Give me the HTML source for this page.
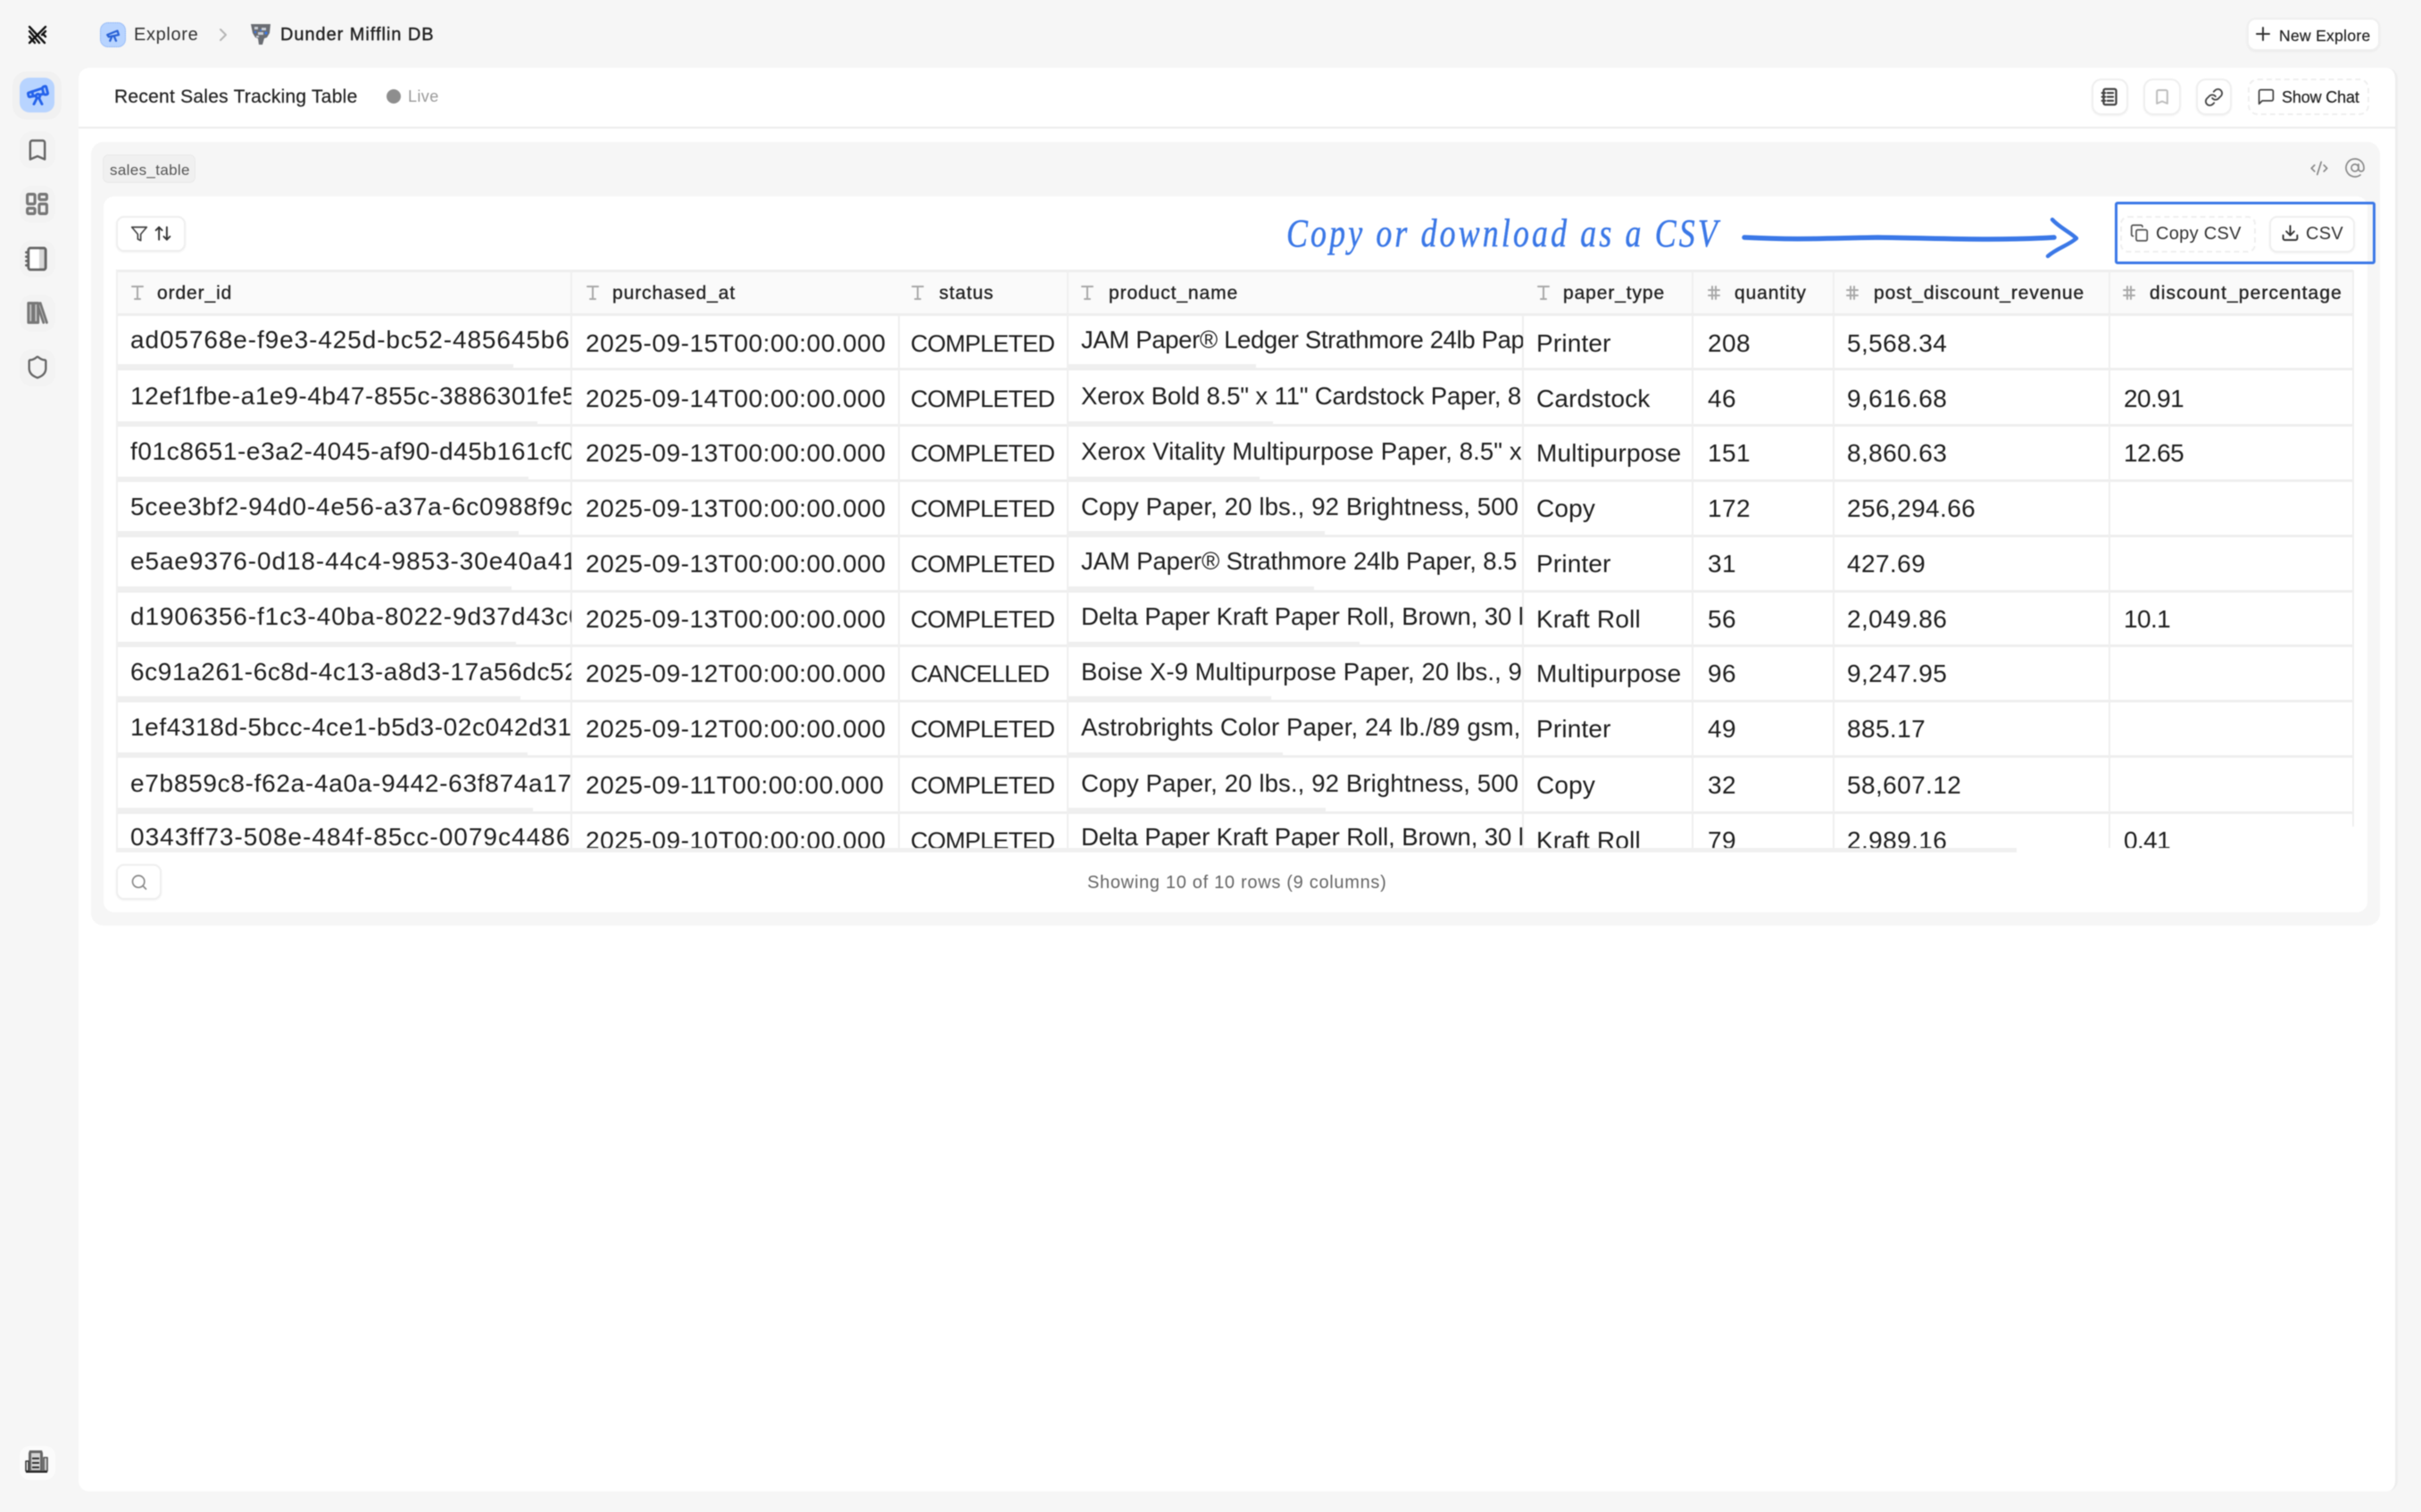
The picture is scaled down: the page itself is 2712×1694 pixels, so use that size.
<!DOCTYPE html>
<html lang="en"><head><meta charset="utf-8"><title>Recent Sales Tracking Table</title>
<style>
html,body{margin:0;padding:0;background:#f6f6f6}
#p{position:relative;width:2712px;height:1694px;overflow:hidden;background:#f6f6f6;font-family:"Liberation Sans",sans-serif;color:#222;filter:blur(.65px)}
#p div,#p svg{position:absolute;box-sizing:border-box}
.t{white-space:nowrap;line-height:30px;height:30px}
svg{fill:none;stroke:currentColor;stroke-width:2;stroke-linecap:round;stroke-linejoin:round}
.btn{background:#fff;border:2px solid #efefef;border-radius:9px;box-shadow:0 1px 2px rgba(0,0,0,.05)}
.dash{border-style:dashed}
.hd{font-size:21px;letter-spacing:.9px;-webkit-text-stroke:.35px #222;top:314px}
.v{width:2px;background:#efefef;top:303px;height:647px}
.h{left:130px;width:2506px;height:3px;background:#eeeeee}
.sb{left:130px;height:5px;background:#efefef}
.sp{left:1197px;height:5px;background:#efefef}
.halo{width:40px;height:42px;background:#f3f3f3;border-radius:14px;left:22px}
.r{left:0;width:2712px;height:36px}
.r div{height:36px;line-height:36px;white-space:nowrap;overflow:hidden;font-size:28px;color:#1e1e1e;margin-top:.75px}
.c1{left:146px;width:494px;letter-spacing:var(--o,.9px);top:var(--d)}
.c2{left:656px;width:340px;letter-spacing:.55px}
.r .c3{left:1020px;width:175px;letter-spacing:-.75px;font-size:27px}
.r .c4{left:1211px;width:495px;letter-spacing:var(--q,-.35px);top:var(--d);font-size:27.5px}
.c5{left:1721px;width:176px;letter-spacing:.17px}
.c6{left:1913px;width:130px;letter-spacing:.4px}
.c7{left:2069px;width:290px;letter-spacing:.4px}
.c8{left:2379px;width:250px;letter-spacing:-.6px}
.ti{color:#a8a8a8;stroke-width:2;top:318px;width:20px;height:20px}
</style></head><body>
<div id="p">

<!-- top bar -->
<svg style="left:30px;top:28px;width:24px;height:22px;color:#111;stroke-width:2.4" viewBox="0 0 24 22"><path d="M3 2l17 18M3 7l11 13M3 13l6 7M21 2L3 20M21 7l-4 4M21 13l-3-3"/></svg>
<div style="left:112px;top:25px;width:29px;height:28px;background:#b8d4ff;border:1px dotted #7fa9f0;border-radius:9px"></div>
<svg style="left:118px;top:30px;width:18px;height:18px;color:#2a62d6;stroke-width:3" viewBox="0 0 24 24"><path d="M3 12l15-6 2 6-15 3zM10 14l-3 7M13 14l3 7"/></svg>
<div class="t" style="left:150px;top:24px;font-size:20px;letter-spacing:.65px;color:#333">Explore</div>
<svg style="left:243px;top:30px;width:14px;height:18px;color:#b5b5b5" viewBox="0 0 14 18"><path d="M4 3l6 6-6 6"/></svg>
<svg style="left:279px;top:25px;width:26px;height:27px;stroke:none" viewBox="0 0 26 27"><path fill="#6a6d73" d="M2 2h22l-1 10-3 5-3 1-2 7h-4l-1-7-3-1-3-5z"/><path fill="#c9ced6" d="M6 5h4v3H6zM14 6h5v3h-5zM10 11h6v3h-6zM8 15h3v2H8z"/><circle cx="19" cy="12" r="1.6" fill="#3b78e7"/><circle cx="7" cy="11" r="1.2" fill="#3b78e7"/><circle cx="13" cy="9" r="1" fill="#3b78e7"/></svg>
<div class="t" style="left:314px;top:24px;font-size:20px;letter-spacing:.95px;-webkit-text-stroke:.4px #222">Dunder Mifflin DB</div>

<div class="btn" style="left:2517px;top:20px;width:149px;height:37px;border-radius:10px"></div>
<svg style="left:2526px;top:29px;width:18px;height:18px;color:#333" viewBox="0 0 18 18"><path d="M2 9h14M9 2v14"/></svg>
<div class="t" style="left:2553px;top:25px;font-size:17.5px;letter-spacing:.3px;-webkit-text-stroke:.2px #222">New Explore</div>

<!-- sidebar -->
<div style="left:14px;top:80px;width:55px;height:54px;background:#f1f1f1;border-radius:16px"></div>
<div style="left:22px;top:87px;width:39px;height:39px;background:#b8d4ff;border-radius:11px"></div>
<svg style="left:29px;top:93px;width:27px;height:27px;color:#2563eb;stroke-width:2.6" viewBox="0 0 24 24"><path d="m10.065 12.493-6.18 1.318a.934.934 0 0 1-1.108-.702l-.537-2.15a1.07 1.07 0 0 1 .691-1.265l13.504-4.44"/><path d="m13.56 11.747 4.332-.924"/><path d="m16 21-3.105-6.21"/><path d="M16.485 5.94a2 2 0 0 1 1.455-2.425l1.09-.272a1 1 0 0 1 1.212.727l1.515 6.06a1 1 0 0 1-.727 1.213l-1.09.272a2 2 0 0 1-2.425-1.455z"/><path d="m6.158 8.633 1.114 4.456"/><path d="m8 21 3.105-6.21"/><circle cx="12" cy="13" r="2"/></svg>
<div class="halo" style="top:147px"></div><div class="halo" style="top:208px"></div><div class="halo" style="top:269px"></div><div class="halo" style="top:330px"></div><div class="halo" style="top:391px"></div>
<svg style="left:28px;top:154px;width:28px;height:28px;color:#666;stroke-width:2.1" viewBox="0 0 24 24"><path d="m19 21-7-3-7 3V5a2 2 0 0 1 2-2h10a2 2 0 0 1 2 2z"/></svg>
<svg style="left:27px;top:214px;width:29px;height:29px;color:#777;stroke-width:2.6" viewBox="0 0 24 24"><rect width="7" height="9" x="3" y="3" rx="1"/><rect width="7" height="5" x="14" y="3" rx="1"/><rect width="7" height="9" x="14" y="12" rx="1"/><rect width="7" height="5" x="3" y="16" rx="1"/></svg>
<svg style="left:27px;top:275px;width:29px;height:30px;color:#666;stroke-width:2.3" viewBox="0 0 24 24"><path d="M2 6h4"/><path d="M2 10h4"/><path d="M2 14h4"/><path d="M2 18h4"/><rect width="16" height="20" x="4" y="2" rx="2" fill="#d8d8d8"/><rect width="10" height="20" x="4" y="2" fill="#fff" stroke="none"/><rect width="16" height="20" x="4" y="2" rx="2"/></svg>
<svg style="left:27px;top:336px;width:29px;height:29px;color:#777;stroke-width:2.4" viewBox="0 0 24 24"><path fill="#c4c4c4" d="M4 3h4v18H4zM9 3h4v18H9z"/><path d="m15 3 6 18"/><path d="m13 6 5 15"/></svg>
<svg style="left:28px;top:397px;width:28px;height:29px;color:#666" viewBox="0 0 24 24"><path d="M20 13c0 5-3.5 7.5-7.66 8.95a1 1 0 0 1-.67-.01C7.5 20.5 4 18 4 13V6a1 1 0 0 1 1-1c2 0 4.5-1.2 6.24-2.72a1.17 1.17 0 0 1 1.52 0C14.51 3.81 17 5 19 5a1 1 0 0 1 1 1z"/></svg>
<div style="left:22px;top:1620px;width:40px;height:38px;background:#fbfbfb;border-radius:11px"></div>
<svg style="left:28px;top:1623px;width:28px;height:30px;stroke:none" viewBox="0 0 28 30"><path fill="#666" d="M5 2h14l1 3v20H4V5z"/><path fill="#d4d4d4" d="M7 5h10v19H7z"/><path fill="#333" d="M8 10h8v2H8zM8 15h8v2H8zM8 20h8v2H8z"/><path fill="#fff" stroke="#333" stroke-width="1.6" d="M1 14h3v11H1z"/><path fill="#ccc" stroke="#555" stroke-width="1.6" d="M21 10h4v15h-4z"/><path fill="#222" d="M1 25h24v2H1z"/></svg>

<!-- main panel -->
<div style="left:88px;top:76px;width:2598px;height:1595px;background:#fff;border-radius:12px;border-right:3px solid #eee"></div>
<div style="left:88px;top:142px;width:2596px;height:2px;background:#ececec"></div>
<div class="t" style="left:128px;top:94px;font-size:21px;letter-spacing:.25px;-webkit-text-stroke:.2px #222">Recent Sales Tracking Table</div>
<div style="left:433px;top:100px;width:16px;height:16px;border-radius:50%;background:#8e8e8e"></div>
<div class="t" style="left:457px;top:93px;font-size:18px;letter-spacing:.4px;color:#999">Live</div>

<div class="btn" style="left:2343px;top:88px;width:41px;height:41px;border-radius:11px"></div>
<svg style="left:2353px;top:98px;width:21px;height:21px;color:#444;stroke-width:2.6" viewBox="0 0 24 24"><rect width="16" height="20" x="4" y="2" rx="2"/><path d="M2 7h4M2 12h4M2 17h4M9 7h7M9 12h7M9 17h7"/></svg>
<div class="btn" style="left:2401px;top:88px;width:42px;height:41px;border-radius:11px"></div>
<svg style="left:2412px;top:98px;width:20px;height:21px;color:#bdbdbd;stroke-width:2.4" viewBox="0 0 24 24"><path d="m19 21-7-3-7 3V5a2 2 0 0 1 2-2h10a2 2 0 0 1 2 2z"/></svg>
<div class="btn" style="left:2460px;top:88px;width:40px;height:41px;border-radius:11px"></div>
<svg style="left:2469px;top:98px;width:22px;height:22px;color:#444" viewBox="0 0 24 24"><path d="M10 13a5 5 0 0 0 7.54.54l3-3a5 5 0 0 0-7.07-7.07l-1.72 1.71"/><path d="M14 11a5 5 0 0 0-7.54-.54l-3 3a5 5 0 0 0 7.07 7.07l1.71-1.71"/></svg>
<div class="btn dash" style="left:2518px;top:88px;width:136px;height:41px;border-radius:11px;box-shadow:none"></div>
<svg style="left:2528px;top:98px;width:21px;height:21px;color:#444" viewBox="0 0 24 24"><path d="M21 15a2 2 0 0 1-2 2H7l-4 4V5a2 2 0 0 1 2-2h14a2 2 0 0 1 2 2z"/></svg>
<div class="t" style="left:2556px;top:94px;font-size:18px;letter-spacing:-.15px;-webkit-text-stroke:.2px #222">Show Chat</div>

<!-- card -->
<div style="left:102px;top:159px;width:2564px;height:878px;background:#f6f6f6;border-radius:14px"></div>
<div style="left:115px;top:173px;width:104px;height:32px;background:#f0f0f0;border:1px solid #e9e9e9;border-radius:7px"></div>
<div class="t" style="left:123px;top:176px;font-size:17px;letter-spacing:.35px;color:#555">sales_table</div>
<svg style="left:2587px;top:178px;width:22px;height:21px;color:#8a8a8a" viewBox="0 0 24 24"><path d="m18 16 4-4-4-4"/><path d="m6 8-4 4 4 4"/><path d="m14.5 4-5 16"/></svg>
<svg style="left:2626px;top:176px;width:24px;height:24px;color:#8a8a8a;stroke-width:1.7" viewBox="0 0 24 24"><circle cx="12" cy="12" r="4"/><path d="M16 8v5a3 3 0 0 0 6 0v-1a10 10 0 1 0-4 8"/></svg>

<div style="left:116px;top:220px;width:2536px;height:802px;background:#fff;border-radius:12px"></div>

<div class="btn" style="left:130px;top:242px;width:78px;height:40px"></div>
<svg style="left:146px;top:251px;width:20px;height:22px;color:#444" viewBox="0 0 24 24"><polygon points="22 3 2 3 10 12.46 10 19 14 21 14 12.46 22 3"/></svg>
<svg style="left:172px;top:251px;width:21px;height:21px;color:#333;stroke-width:2.2" viewBox="0 0 24 24"><path d="m21 16-4 4-4-4"/><path d="M17 20V4"/><path d="m3 8 4-4 4 4"/><path d="M7 4v16"/></svg>

<!-- annotation -->
<div class="t" style="left:1441px;top:244px;font-family:'Liberation Serif',serif;font-style:italic;font-size:39px;height:36px;line-height:36px;letter-spacing:3.4px;color:#3b78e7;transform-origin:left center;transform:scale(.92,1.15);-webkit-text-stroke:.4px #3b78e7">Copy or download as a CSV</div>
<svg style="left:1940px;top:235px;width:400px;height:60px;color:#3b78e7;stroke-width:5" viewBox="1940 235 400 60"><path d="M1954 266c60 3 90 1 150 0 70 1 130 4 197 0" stroke-width="5.5"/><path d="M2299 246c8 9 20 14 27 21-9 8-22 11-32 20" stroke-width="4.5"/></svg>
<svg style="left:2369px;top:226px;width:292px;height:70px;color:#3b78e7" viewBox="0 0 292 70"><rect x="1.5" y="1.5" width="289" height="67" rx="1.5" stroke-width="3"/></svg>
<div class="btn dash" style="left:2375px;top:242px;width:152px;height:41px;box-shadow:none"></div>
<svg style="left:2386px;top:250px;width:21px;height:22px;color:#555" viewBox="0 0 24 24"><rect width="14" height="14" x="8" y="8" rx="2"/><path d="M4 16c-1.1 0-2-.9-2-2V4c0-1.1.9-2 2-2h10c1.1 0 2 .9 2 2"/></svg>
<div class="t" style="left:2415px;top:247px;font-size:20px;letter-spacing:.3px;color:#333">Copy CSV</div>
<div class="btn" style="left:2542px;top:242px;width:96px;height:41px"></div>
<svg style="left:2555px;top:250px;width:21px;height:22px;color:#333;stroke-width:2.2" viewBox="0 0 24 24"><path d="M21 15v4a2 2 0 0 1-2 2H5a2 2 0 0 1-2-2v-4"/><polyline points="7 10 12 15 17 10"/><line x1="12" x2="12" y1="15" y2="3"/></svg>
<div class="t" style="left:2583px;top:247px;font-size:20px;letter-spacing:.3px;color:#333">CSV</div>

<!-- table -->
<div style="left:130px;top:303px;width:2506px;height:50px;background:#fafafa"></div>
<div class="h" style="top:302px"></div>
<div class="h" style="top:351px"></div>
<div class="h" style="top:412px"></div>
<div class="h" style="top:475px"></div>
<div class="h" style="top:537px"></div>
<div class="h" style="top:599px"></div>
<div class="h" style="top:661px"></div>
<div class="h" style="top:722px"></div>
<div class="h" style="top:784px"></div>
<div class="h" style="top:846px"></div>
<div class="h" style="top:909px"></div>

<div class="sb" style="top:408px;width:445px"></div>
<div class="sb" style="top:472px;width:472px"></div>
<div class="sb" style="top:534px;width:462px"></div>
<div class="sb" style="top:595px;width:451px"></div>
<div class="sb" style="top:657px;width:443px"></div>
<div class="sb" style="top:719px;width:448px"></div>
<div class="sb" style="top:780px;width:453px"></div>
<div class="sb" style="top:843px;width:461px"></div>
<div class="sb" style="top:905px;width:467px"></div>
<div class="sp" style="top:408px;width:210px"></div>
<div class="sp" style="top:472px;width:229px"></div>
<div class="sp" style="top:534px;width:214px"></div>
<div class="sp" style="top:595px;width:287px"></div>
<div class="sp" style="top:657px;width:275px"></div>
<div class="sp" style="top:719px;width:326px"></div>
<div class="sp" style="top:780px;width:227px"></div>
<div class="sp" style="top:843px;width:240px"></div>
<div class="sp" style="top:905px;width:288px"></div>

<div class="v" style="left:130px;background:#f0f0f0"></div>
<div class="v" style="left:639px"></div>
<div class="v" style="left:1006px;top:353px;height:597px"></div>
<div class="v" style="left:1195px"></div>
<div class="v" style="left:1705px;top:353px;height:597px"></div>
<div class="v" style="left:1895px"></div>
<div class="v" style="left:2053px"></div>
<div class="v" style="left:2362px"></div>
<div class="v" style="left:2635px;height:623px"></div>

<svg class="ti" style="left:144px" viewBox="0 0 20 20"><path d="M4 3h12M10 3v14M7 17h6"/></svg><div class="t hd" style="left:176px">order_id</div>
<svg class="ti" style="left:654px" viewBox="0 0 20 20"><path d="M4 3h12M10 3v14M7 17h6"/></svg><div class="t hd" style="left:686px">purchased_at</div>
<svg class="ti" style="left:1018px" viewBox="0 0 20 20"><path d="M4 3h12M10 3v14M7 17h6"/></svg><div class="t hd" style="left:1052px">status</div>
<svg class="ti" style="left:1208px" viewBox="0 0 20 20"><path d="M4 3h12M10 3v14M7 17h6"/></svg><div class="t hd" style="left:1242px">product_name</div>
<svg class="ti" style="left:1719px" viewBox="0 0 20 20"><path d="M4 3h12M10 3v14M7 17h6"/></svg><div class="t hd" style="left:1751px">paper_type</div>
<svg class="ti" style="left:1910px" viewBox="0 0 20 20"><path d="M4 7h12M4 13h12M8 3v14M12 3v14"/></svg><div class="t hd" style="left:1943px">quantity</div>
<svg class="ti" style="left:2065px" viewBox="0 0 20 20"><path d="M4 7h12M4 13h12M8 3v14M12 3v14"/></svg><div class="t hd" style="left:2099px">post_discount_revenue</div>
<svg class="ti" style="left:2375px" viewBox="0 0 20 20"><path d="M4 7h12M4 13h12M8 3v14M12 3v14"/></svg><div class="t hd" style="left:2408px;letter-spacing:1.1px">discount_percentage</div>

<div class="r" style="top:366px;--d:-4px"><div class="c1">ad05768e-f9e3-425d-bc52-485645b6</div><div class="c2">2025-09-15T00:00:00.000</div><div class="c3">COMPLETED</div><div class="c4">JAM Paper® Ledger Strathmore 24lb Paper</div><div class="c5">Printer</div><div class="c6">208</div><div class="c7">5,568.34</div><div class="c8"></div></div>
<div class="r" style="top:428px;--d:-3px;--o:.6px;--q:-.15px"><div class="c1">12ef1fbe-a1e9-4b47-855c-3886301fe5</div><div class="c2">2025-09-14T00:00:00.000</div><div class="c3">COMPLETED</div><div class="c4">Xerox Bold 8.5" x 11" Cardstock Paper, 8</div><div class="c5">Cardstock</div><div class="c6">46</div><div class="c7">9,616.68</div><div class="c8">20.91</div></div>
<div class="r" style="top:489px;--d:-2px;--o:.6px;--q:.11px"><div class="c1">f01c8651-e3a2-4045-af90-d45b161cf0</div><div class="c2">2025-09-13T00:00:00.000</div><div class="c3">COMPLETED</div><div class="c4">Xerox Vitality Multipurpose Paper, 8.5" x</div><div class="c5">Multipurpose</div><div class="c6">151</div><div class="c7">8,860.63</div><div class="c8">12.65</div></div>
<div class="r" style="top:551px;--d:-2px;--o:.85px;--q:.14px"><div class="c1">5cee3bf2-94d0-4e56-a37a-6c0988f9c</div><div class="c2">2025-09-13T00:00:00.000</div><div class="c3">COMPLETED</div><div class="c4">Copy Paper, 20 lbs., 92 Brightness, 500</div><div class="c5">Copy</div><div class="c6">172</div><div class="c7">256,294.66</div><div class="c8"></div></div>
<div class="r" style="top:613px;--d:-3px;--o:.9px;--q:-.12px"><div class="c1">e5ae9376-0d18-44c4-9853-30e40a41</div><div class="c2">2025-09-13T00:00:00.000</div><div class="c3">COMPLETED</div><div class="c4">JAM Paper® Strathmore 24lb Paper, 8.5</div><div class="c5">Printer</div><div class="c6">31</div><div class="c7">427.69</div><div class="c8"></div></div>
<div class="r" style="top:675px;--d:-3px;--q:-.1px"><div class="c1">d1906356-f1c3-40ba-8022-9d37d43c0</div><div class="c2">2025-09-13T00:00:00.000</div><div class="c3">COMPLETED</div><div class="c4">Delta Paper Kraft Paper Roll, Brown, 30 lb</div><div class="c5">Kraft Roll</div><div class="c6">56</div><div class="c7">2,049.86</div><div class="c8">10.1</div></div>
<div class="r" style="top:736px;--d:-2px;--o:.6px;--q:.08px"><div class="c1">6c91a261-6c8d-4c13-a8d3-17a56dc52</div><div class="c2">2025-09-12T00:00:00.000</div><div class="c3">CANCELLED</div><div class="c4">Boise X-9 Multipurpose Paper, 20 lbs., 9</div><div class="c5">Multipurpose</div><div class="c6">96</div><div class="c7">9,247.95</div><div class="c8"></div></div>
<div class="r" style="top:798px;--d:-2px;--o:.6px;--q:.12px"><div class="c1">1ef4318d-5bcc-4ce1-b5d3-02c042d31e</div><div class="c2">2025-09-12T00:00:00.000</div><div class="c3">COMPLETED</div><div class="c4">Astrobrights Color Paper, 24 lb./89 gsm,</div><div class="c5">Printer</div><div class="c6">49</div><div class="c7">885.17</div><div class="c8"></div></div>
<div class="r" style="top:861px;--d:-2px;--o:.7px;--q:.14px"><div class="c1">e7b859c8-f62a-4a0a-9442-63f874a17e</div><div class="c2">2025-09-11T00:00:00.000</div><div class="c3">COMPLETED</div><div class="c4">Copy Paper, 20 lbs., 92 Brightness, 500</div><div class="c5">Copy</div><div class="c6">32</div><div class="c7">58,607.12</div><div class="c8"></div></div>
<div class="r" style="top:923px;--d:-4px;--o:1px;--q:-.1px"><div class="c1">0343ff73-508e-484f-85cc-0079c4486</div><div class="c2">2025-09-10T00:00:00.000</div><div class="c3">COMPLETED</div><div class="c4">Delta Paper Kraft Paper Roll, Brown, 30 lb</div><div class="c5">Kraft Roll</div><div class="c6">79</div><div class="c7">2,989.16</div><div class="c8">0.41</div></div>

<!-- clip under table -->
<div style="left:116px;top:950px;width:2536px;height:72px;background:#fff;border-radius:0 0 12px 12px"></div>
<div style="left:130px;top:950px;width:2129px;height:5px;background:#f0f0f0"></div>

<div class="btn" style="left:130px;top:968px;width:51px;height:40px"></div>
<svg style="left:146px;top:978px;width:20px;height:21px;color:#888" viewBox="0 0 24 24"><circle cx="11" cy="11" r="8"/><path d="m21 21-4.3-4.3"/></svg>
<div class="t" style="left:1218px;top:974px;font-size:20px;letter-spacing:.7px;color:#666">Showing 10 of 10 rows (9 columns)</div>

</div>
</body></html>
